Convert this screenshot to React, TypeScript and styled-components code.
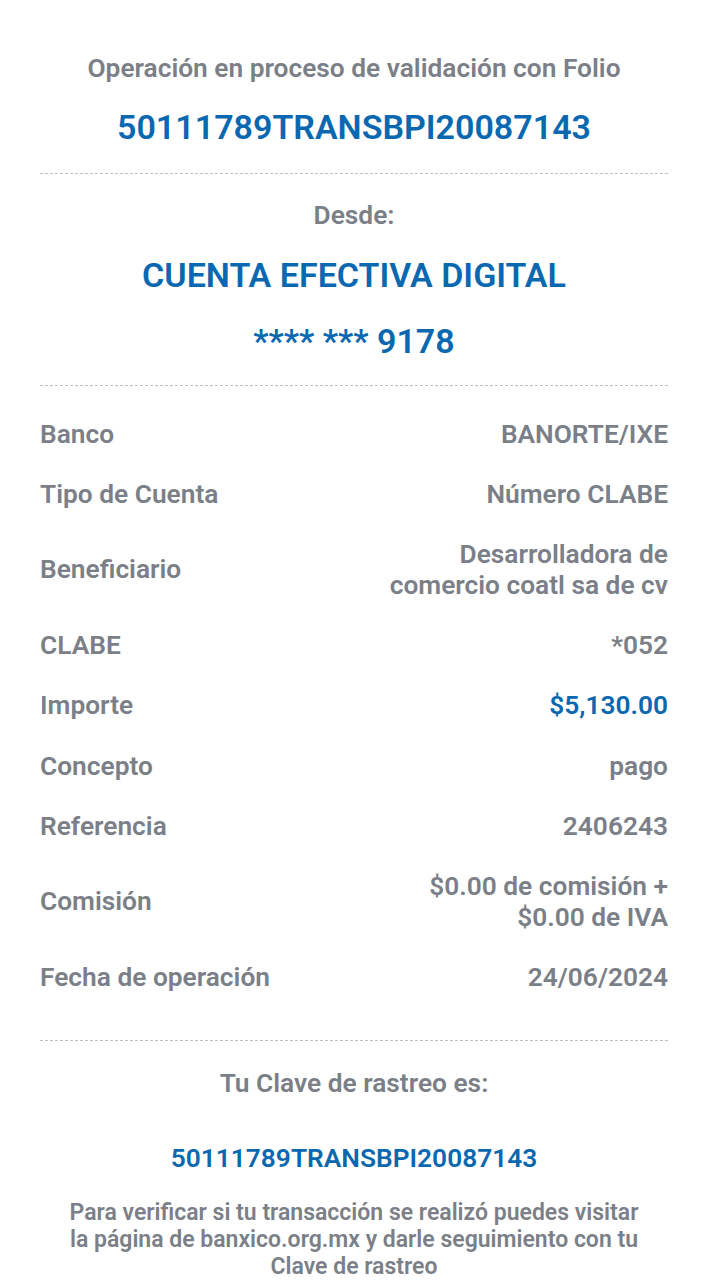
import styled, { createGlobalStyle } from "styled-components";

const GlobalStyle = createGlobalStyle`
    body {
        margin: 0;
        background: #ffffff;
        font-family: Roboto, "Liberation Sans", Arial, sans-serif;
    }
`;

interface IRow {
    label: string,
    value: string,
    accent?: boolean
}

const rows: IRow[] = [
    {label: "Banco", value: "BANORTE/IXE"},
    {label: "Tipo de Cuenta", value: "Número CLABE"},
    {label: "Beneficiario", value: "Desarrolladora de comercio coatl sa de cv"},
    {label: "CLABE", value: "*052"},
    {label: "Importe", value: "$5,130.00", accent: true},
    {label: "Concepto", value: "pago"},
    {label: "Referencia", value: "2406243"},
    {label: "Comisión", value: "$0.00 de comisión + $0.00 de IVA"},
    {label: "Fecha de operación", value: "24/06/2024"},
];

const FOLIO = "50111789TRANSBPI20087143";

export default function App() {
    return (
        <Wrapper>
            <GlobalStyle/>
            <Section>
                <Caption>Operación en proceso de validación con Folio</Caption>
                <BigBlue $top={23}>{FOLIO}</BigBlue>
            </Section>

            <Divider $top={26}/>

            <Section>
                <Caption $top={25}>Desde:</Caption>
                <BigBlue $top={24}>CUENTA EFECTIVA DIGITAL</BigBlue>
                <BigBlue $top={26}>**** *** 9178</BigBlue>
            </Section>

            <Divider $top={24}/>

            <DetailList>
                {rows.map((row) => (
                    <Row key={row.label}>
                        <Label>{row.label}</Label>
                        <Value $accent={row.accent}>{row.value}</Value>
                    </Row>
                ))}
            </DetailList>

            <Divider $top={32}/>

            <Section>
                <Caption $top={26}>Tu Clave de rastreo es:</Caption>
                <Tracking>{FOLIO}</Tracking>
                <Note>
                    Para verificar si tu transacción se realizó puedes visitar la página de
                    banxico.org.mx y darle seguimiento con tu Clave de rastreo
                </Note>
            </Section>
        </Wrapper>
    );
}

const Wrapper = styled.main`
    display: flex;
    flex-direction: column;
    padding: 52px 39px 0 40px;
    color: #7b7f88;
`;

const Section = styled.section`
    display: flex;
    flex-direction: column;
    align-items: center;
    text-align: center;
`;

const Caption = styled.h3<{ $top?: number }>`
    margin: ${(p) => p.$top ?? 0}px 0 0;
    font-size: 26.3px;
    line-height: 32px;
    font-weight: 600;
    color: #7b7f88;
`;

const BigBlue = styled.h2<{ $top?: number }>`
    margin: ${(p) => p.$top ?? 0}px 0 0;
    font-size: 34px;
    line-height: 40px;
    font-weight: 600;
    color: #0a68b1;
`;

const Divider = styled.hr<{ $top?: number }>`
    width: 100%;
    margin: ${(p) => p.$top ?? 0}px 0 0;
    border: none;
    border-top: 1px dashed #bcbfc4;
    height: 0;
`;

const DetailList = styled.dl`
    display: flex;
    flex-direction: column;
    margin: 18px 0 0;
`;

const Row = styled.div`
    display: flex;
    justify-content: space-between;
    align-items: center;
    padding: 14.6px 0;
    font-size: 26.3px;
    line-height: 31px;
    font-weight: 600;
`;

const Label = styled.dt`
    color: #7b7f88;
`;

const Value = styled.dd<{ $accent?: boolean }>`
    margin: 0;
    max-width: 300px;
    text-align: right;
    color: ${(p) => (p.$accent ? "#0a68b1" : "#7b7f88")};
`;

const Tracking = styled.p`
    margin: 43px 0 0;
    font-size: 26.3px;
    line-height: 32px;
    font-weight: 600;
    color: #0a68b1;
`;

const Note = styled.p`
    margin: 25px 0 0;
    max-width: 585px;
    font-size: 23px;
    line-height: 27px;
    font-weight: 600;
    color: #7b7f88;
`;
